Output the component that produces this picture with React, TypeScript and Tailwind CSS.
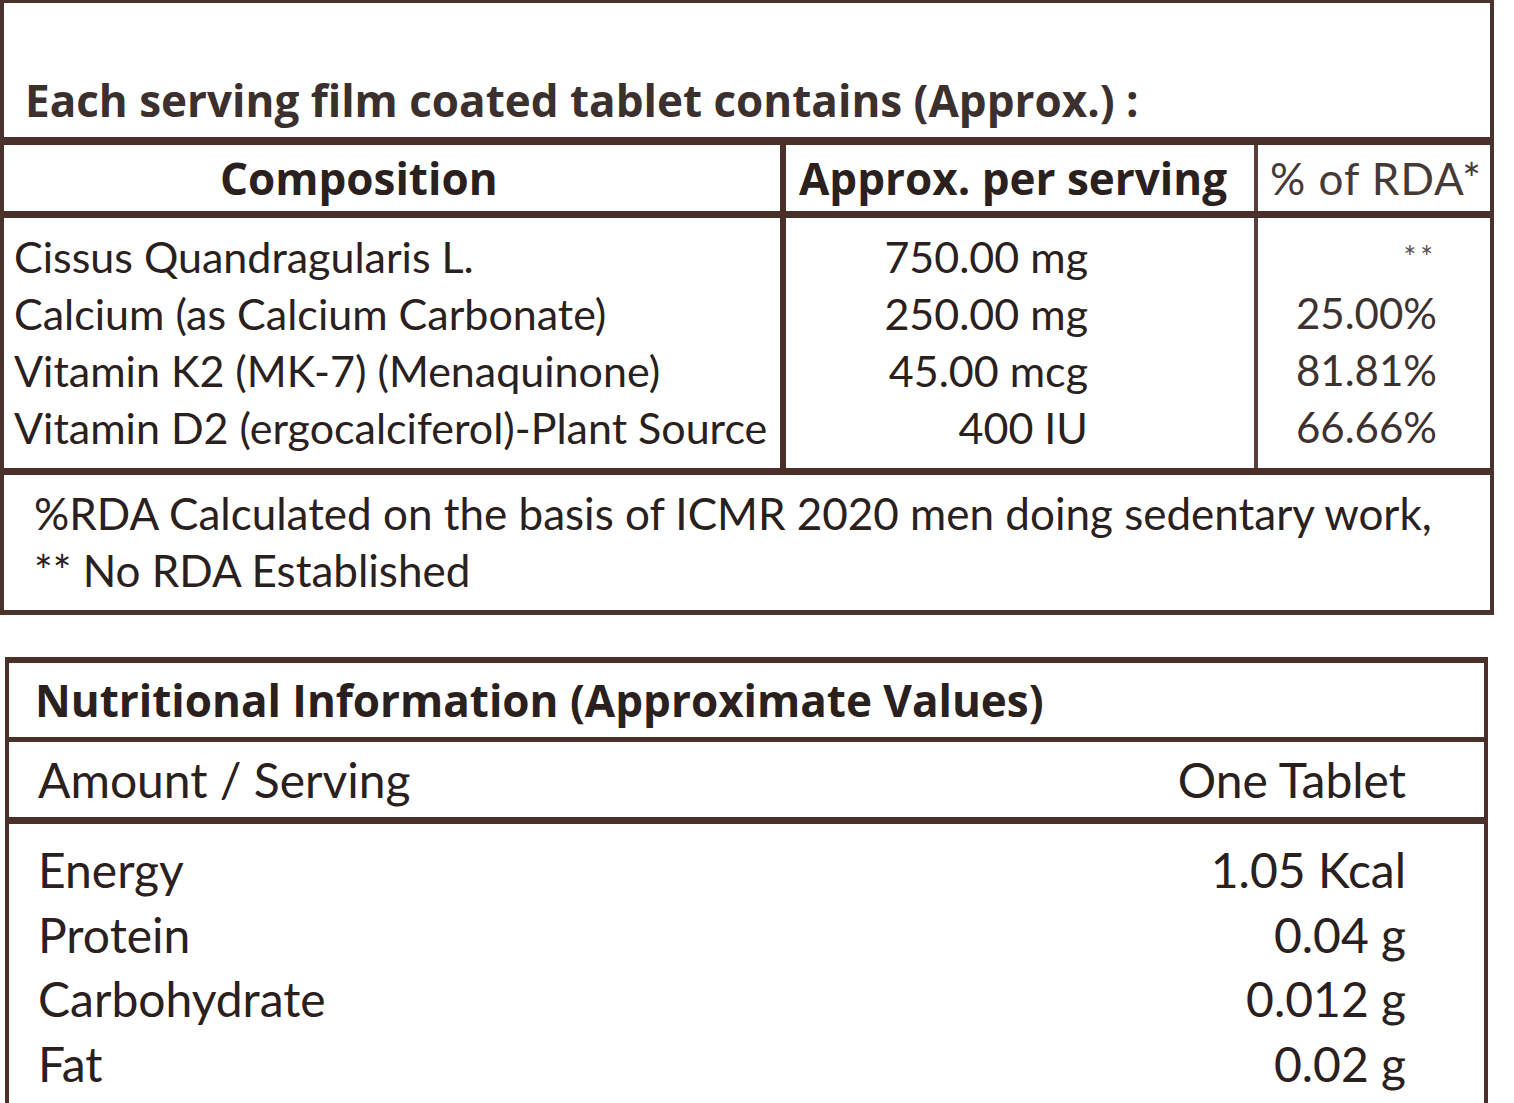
import React from "react";

const ingredients = [
    { name: "Cissus Quandragularis L.", amount: "750.00 mg", rda: "**" },
    { name: "Calcium (as Calcium Carbonate)", amount: "250.00 mg", rda: "25.00%" },
    { name: "Vitamin K2 (MK-7) (Menaquinone)", amount: "45.00 mcg", rda: "81.81%" },
    { name: "Vitamin D2 (ergocalciferol)-Plant Source", amount: "400 IU", rda: "66.66%" },
];

const nutrients = [
    { name: "Energy", value: "1.05 Kcal" },
    { name: "Protein", value: "0.04 g" },
    { name: "Carbohydrate", value: "0.012 g" },
    { name: "Fat", value: "0.02 g" },
];

// bold headings are set in Open Sans, body copy in Lato
const heading = "font-['Open_Sans',sans-serif] font-bold text-[44px] leading-none";

function CompositionPanel() {
    return (
        <div className="w-[1494px] border-x-[4px] border-t-[3px] border-b-[5px] border-[#4a322d]">
            <div className="h-[134px] flex items-end pb-[15px] pl-[21px]">
                <h2 className={`${heading} text-[#3b302d]`}>
                    Each serving film coated tablet contains (Approx.) :
                </h2>
            </div>

            <div className="border-t-[8px] border-b-[7px] border-[#4a2f2a] flex h-[81px]">
                <div className="w-[782px] border-r-[6px] border-[#4a2f2a] flex items-center pl-[216px]">
                    <span className={heading}>Composition</span>
                </div>
                <div className="w-[472px] border-r-[4px] border-[#5a403a] flex items-center pl-[13px]">
                    <span className={heading}>Approx. per serving</span>
                </div>
                <div className="flex-1 flex items-center pl-[12px]">
                    <span className="text-[44px] leading-none text-[#463a37] tracking-[1px]">
                        % of RDA*
                    </span>
                </div>
            </div>

            <div className="flex h-[257px] border-b-[7px] border-[#4a2f2a]">
                <ul className="w-[782px] border-r-[6px] border-[#4a2f2a] pt-[10px] pl-[10px]">
                    {ingredients.map((item) => (
                        <li key={item.name} className="text-[43px] leading-[57px] whitespace-nowrap">
                            {item.name}
                        </li>
                    ))}
                </ul>
                <ul className="w-[472px] border-r-[4px] border-[#5a403a] pt-[10px] pr-[166px] text-right">
                    {ingredients.map((item) => (
                        <li key={item.name} className="text-[43px] leading-[57px]">
                            {item.amount}
                        </li>
                    ))}
                </ul>
                <ul className="flex-1 pt-[10px] pr-[53px] text-right">
                    {ingredients.map((item) => (
                        <li key={item.name} className="text-[42px] leading-[57px] text-[#3d3230]">
                            {item.rda === "**" ? (
                                <span className="text-[30px] align-top tracking-[4px] text-[#5a4e4b]">**</span>
                            ) : (
                                item.rda
                            )}
                        </li>
                    ))}
                </ul>
            </div>

            <div className="h-[135px] pl-[30px] pt-[10px]">
                <p className="text-[44px] leading-[57px] whitespace-nowrap">
                    %RDA Calculated on the basis of ICMR 2020 men doing sedentary work,
                </p>
                <p className="text-[44px] leading-[57px]">** No RDA Established</p>
            </div>
        </div>
    );
}

function NutritionPanel() {
    return (
        <div className="mt-[42px] ml-[5px] w-[1483px] border-x-[4px] border-t-[6px] border-[#4a2f2a]">
            <div className="h-[79px] flex items-center pl-[26px] border-b-[5px] border-[#4a2f2a]">
                <h2 className={`${heading} text-[43px]`}>Nutritional Information (Approximate Values)</h2>
            </div>
            <div className="h-[82px] flex items-center justify-between pl-[29px] pr-[78px] border-b-[7px] border-[#4a2f2a]">
                <span className="text-[48px] leading-none">Amount / Serving</span>
                <span className="text-[48px] leading-none">One Tablet</span>
            </div>
            <ul className="pt-[14px] pl-[29px] pr-[78px] pb-[20px]">
                {nutrients.map((n) => (
                    <li key={n.name} className="flex justify-between text-[48px] leading-[64.5px]">
                        <span>{n.name}</span>
                        <span>{n.value}</span>
                    </li>
                ))}
            </ul>
        </div>
    );
}

export default function App() {
    return (
        <div className="min-h-screen bg-white font-['Lato',sans-serif] text-[#2a201d]">
            <CompositionPanel />
            <NutritionPanel />
        </div>
    );
}
